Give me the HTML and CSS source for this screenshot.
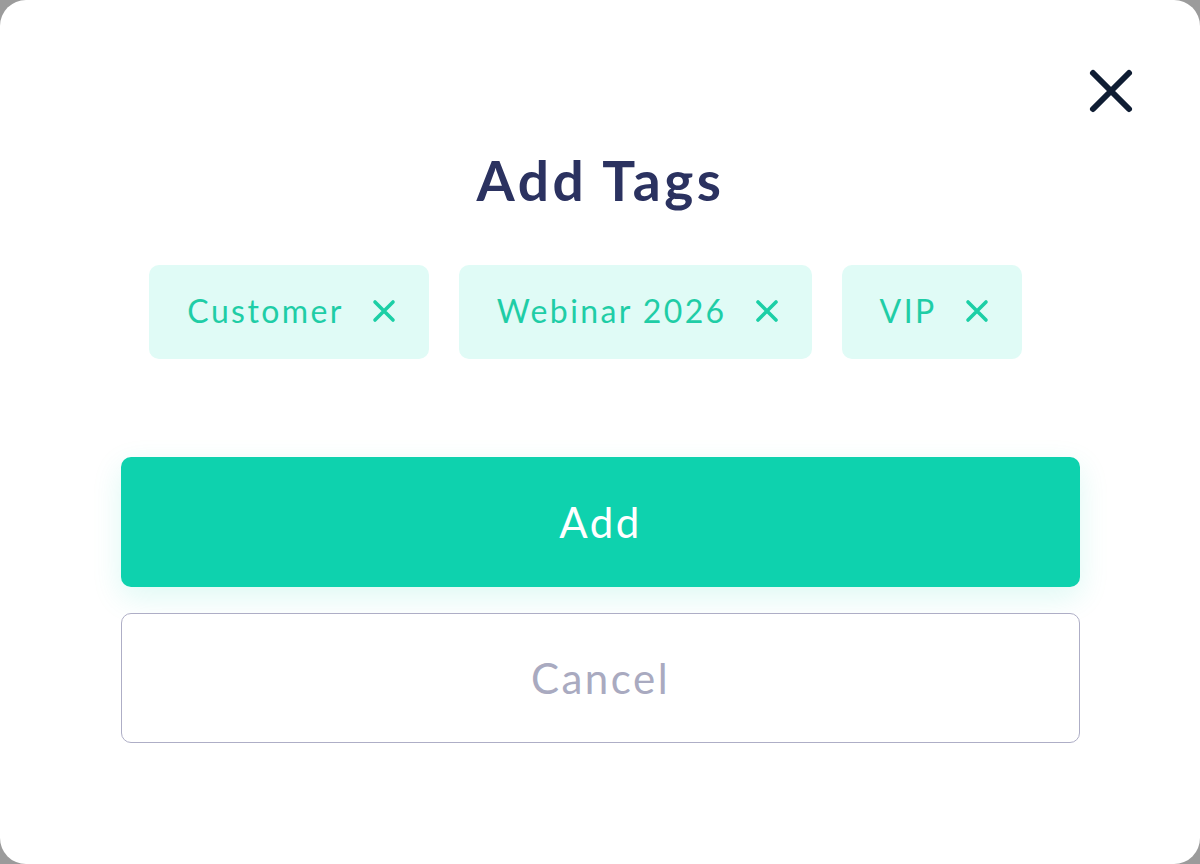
FILE: index.html
```html
<!DOCTYPE html>
<html lang="en">
<head>
    <meta charset="UTF-8">
    <meta name="viewport" content="width=device-width, initial-scale=1.0">
    <title>Add Tags</title>
    <link rel="stylesheet" href="styles.css">
</head>
<body>
    <div class="modal">
        <button class="btn-cerrar" aria-label="Close">
            <svg width="46" height="46" viewBox="0 0 46 46">
                <path d="M5 5 L41 41 M41 5 L5 41" stroke="#0f1d33" stroke-width="6" stroke-linecap="round" fill="none"/>
            </svg>
        </button>

        <h2 class="titulo">Add Tags</h2>

        <div class="tags">
            <div class="tag">Customer <span class="tag-x"><svg width="24" height="24" viewBox="0 0 24 24"><path d="M3 3 L21 21 M21 3 L3 21" stroke="#1ccfa6" stroke-width="3.6" stroke-linecap="round"/></svg></span></div>
            <div class="tag">Webinar 2026 <span class="tag-x"><svg width="24" height="24" viewBox="0 0 24 24"><path d="M3 3 L21 21 M21 3 L3 21" stroke="#1ccfa6" stroke-width="3.6" stroke-linecap="round"/></svg></span></div>
            <div class="tag">VIP <span class="tag-x"><svg width="24" height="24" viewBox="0 0 24 24"><path d="M3 3 L21 21 M21 3 L3 21" stroke="#1ccfa6" stroke-width="3.6" stroke-linecap="round"/></svg></span></div>
        </div>

        <button class="btn btn-add">Add</button>
        <button class="btn btn-cancel">Cancel</button>
    </div>
</body>
</html>
```

FILE: styles.css
```css
html, body {
    margin: 0;
    height: 100%;
}
body {
    background-color: #9b9b9b;
    font-family: Lato, "Open Sans", sans-serif;
}
.modal {
    position: relative;
    box-sizing: border-box;
    height: 864px;
    background: white;
    border-radius: 26px;
    padding: 138px 120px 0 121px;
    display: flex;
    flex-direction: column;
    align-items: stretch;
}
.btn-cerrar {
    position: absolute;
    top: 68px;
    right: 66px;
    background: none;
    border: none;
    padding: 0;
    cursor: pointer;
}
.btn-cerrar svg {
    display: block;
}
.titulo {
    margin: 0;
    text-align: center;
    font-size: 55px;
    font-weight: 700;
    letter-spacing: 3.5px;
    color: #2b3260;
    line-height: 84px;
}
.tags {
    display: flex;
    justify-content: center;
    margin-top: 43px;
    margin-bottom: 98px;
}
.tag {
    display: flex;
    align-items: center;
    height: 94px;
    box-sizing: border-box;
    padding: 0 33px 3px 38px;
    margin-right: 30px;
    background: #e0fbf6;
    border-radius: 10px;
    color: #1fcda6;
    font-size: 32px;
    letter-spacing: 2.4px;
}
.tag-x {
    display: flex;
    margin-left: 28px;
}
.btn {
    height: 130px;
    border-radius: 10px;
    font-family: Lato, "Open Sans", sans-serif;
    font-size: 42px;
    letter-spacing: 2.5px;
    cursor: pointer;
}
.btn-add {
    background-color: #0ed2ae;
    color: white;
    border: none;
    box-shadow: 0 10px 30px rgba(14, 210, 174, 0.14);
}
.btn-cancel {
    margin-top: 26px;
    background: white;
    color: #a9aac0;
    border: 1.5px solid #aeaec6;
}
```
